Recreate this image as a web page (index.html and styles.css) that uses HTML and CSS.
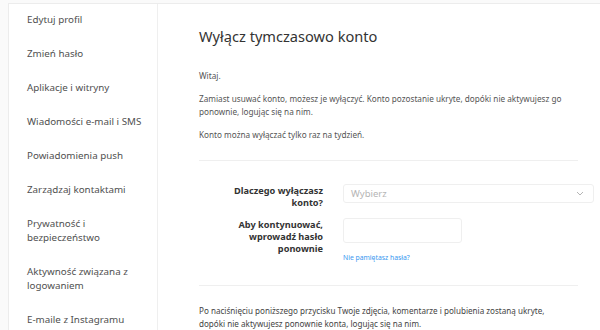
FILE: index.html
```html
<!DOCTYPE html>
<html lang="pl">
  <head>
    <meta charset="UTF-8" />
    <meta name="viewport" content="width=device-width, initial-scale=1.0" />
    <title>Wyłącz tymczasowo konto</title>
    <link rel="stylesheet" href="styles.css">
  </head>
  <body>
    <div class="settings">
      <ul class="side-nav">
        <li>Edytuj profil</li>
        <li>Zmień hasło</li>
        <li>Aplikacje i witryny</li>
        <li>Wiadomości e-mail i SMS</li>
        <li>Powiadomienia push</li>
        <li>Zarządzaj kontaktami</li>
        <li>Prywatność i bezpieczeństwo</li>
        <li>Aktywność związana z logowaniem</li>
        <li>E-maile z Instagramu</li>
      </ul>

      <div class="content">
        <h1>Wyłącz tymczasowo konto</h1>
        <p class="hello">Witaj.</p>
        <p>Zamiast usuwać konto, możesz je wyłączyć. Konto pozostanie ukryte, dopóki nie aktywujesz go ponownie, logując się na nim.</p>
        <p>Konto można wyłączać tylko raz na tydzień.</p>

        <div class="divider"></div>

        <div class="form-row">
          <label class="form-label">Dlaczego wyłączasz konto?</label>
          <div class="select">
            <span>Wybierz</span>
            <svg width="8" height="5" viewBox="0 0 8 5"><path d="M1 1l3 3 3-3" fill="none" stroke="#b5b5b5" stroke-width="1"/></svg>
          </div>
        </div>

        <div class="form-row">
          <label class="form-label">Aby kontynuować, wprowadź hasło ponownie</label>
          <div>
            <div class="input"></div>
            <a class="forgot" href="#">Nie pamiętasz hasła?</a>
          </div>
        </div>

        <div class="divider"></div>

        <p class="notice">Po naciśnięciu poniższego przycisku Twoje zdjęcia, komentarze i polubienia zostaną ukryte, dopóki nie aktywujesz ponownie konta, logując się na nim.</p>
      </div>
    </div>
  </body>
</html>
```

FILE: styles.css
```css
body {
  margin: 0;
  padding: 0;
  font-family: "Noto Sans", "Open Sans", sans-serif;
  background: #fafafa;
  color: #262626;
  overflow: hidden;
}

.settings {
  display: flex;
  margin: 3px 0 0 8px;
  background: white;
  border: 1px solid #ececec;
  border-right: none;
  min-height: 400px;
}

.side-nav {
  list-style: none;
  margin: 0;
  padding: 0;
  width: 148px;
  flex-shrink: 0;
  border-right: 1px solid #efefef;
}

.side-nav li {
  padding: 9px 12px 11px 18px;
  font-size: 9.8px;
  line-height: 14px;
  color: #505050;
}

.content {
  flex: 1;
  padding: 21px 0 0 41px;
}

h1 {
  margin: 0;
  font-size: 14.6px;
  line-height: 22px;
  font-weight: 400;
  color: #333;
}

.content p {
  margin: 9px 0 0;
  font-size: 8.2px;
  line-height: 13.5px;
  color: #555;
  max-width: 380px;
}

.content p.hello {
  margin-top: 22px;
}

.divider {
  height: 1px;
  background: #efefef;
  margin: 19px 22px 0 0;
}

.form-row {
  display: flex;
  gap: 20px;
  margin-top: 9px;
}

.divider + .form-row {
  margin-top: 23px;
}

.form-label {
  width: 100px;
  margin-left: 24px;
  padding-top: 1px;
  text-align: right;
  font-size: 9.2px;
  line-height: 12px;
  font-weight: 700;
  color: #333;
}

.select {
  width: 251px;
  height: 19px;
  box-sizing: border-box;
  border: 1px solid #efefef;
  border-radius: 3px;
  display: flex;
  align-items: center;
  justify-content: space-between;
  padding: 0 9px 0 7px;
  font-size: 9.5px;
  color: #b5b5b5;
}

.input {
  width: 119px;
  height: 25px;
  box-sizing: border-box;
  border: 1px solid #efefef;
  border-radius: 3px;
}

.forgot {
  display: block;
  margin-top: 10px;
  font-size: 6.8px;
  line-height: 10px;
  color: #3897f0;
  text-decoration: none;
}

.form-row + .divider {
  margin-top: 22px;
}

.content p.notice {
  margin-top: 18px;
  font-size: 8.1px;
  line-height: 13px;
  color: #444;
  max-width: 360px;
}
```
